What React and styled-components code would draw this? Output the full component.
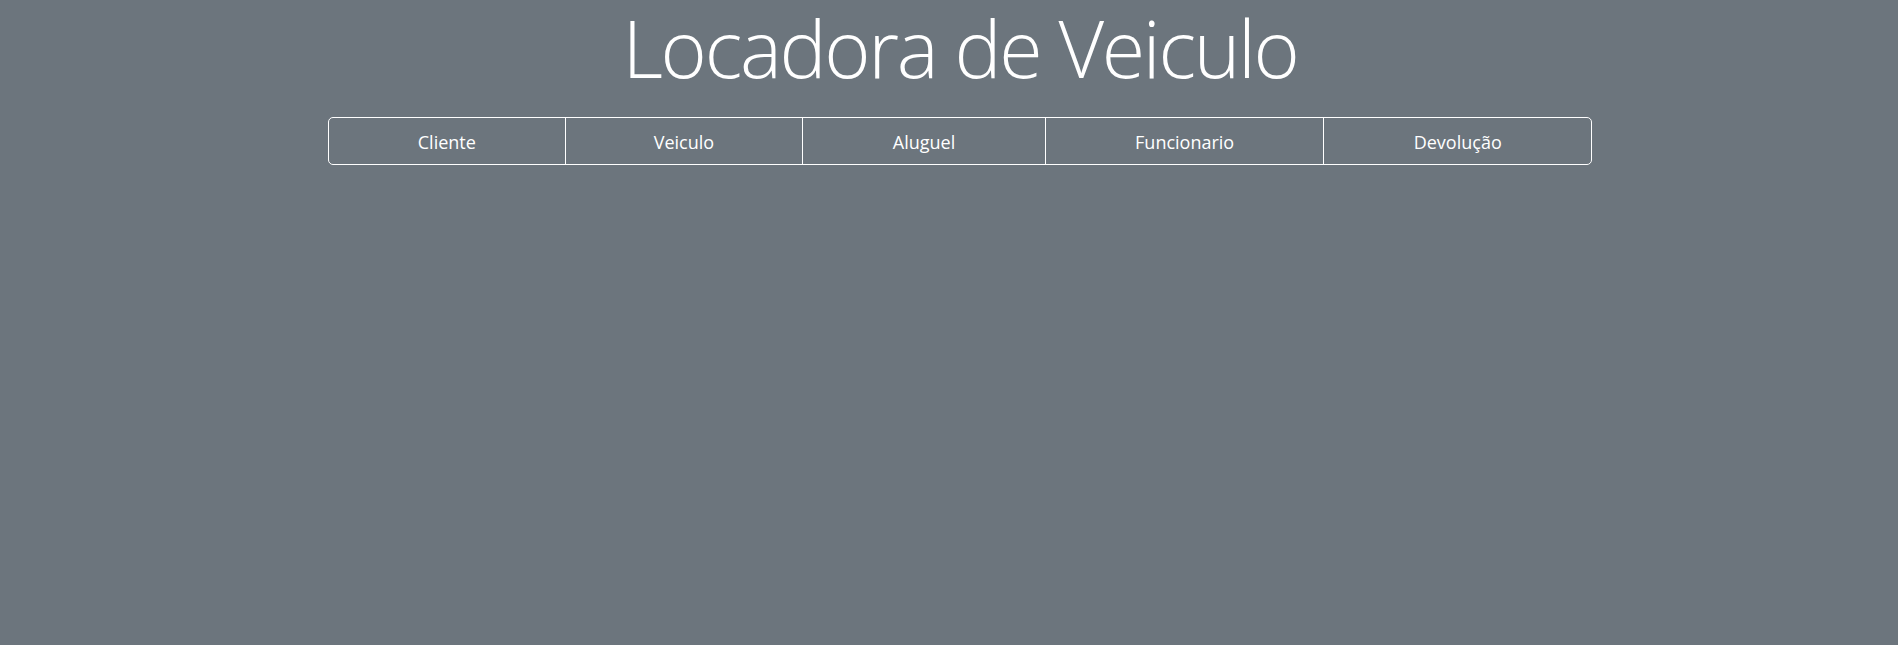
import React from 'react';
import styled, { createGlobalStyle } from 'styled-components';

const GlobalStyle = createGlobalStyle`
  html, body {
    margin: 0;
    padding: 0;
    background: #6c757d;
    min-height: 100%;
  }
  body {
    font-family: "Open Sans", "Noto Sans", "Liberation Sans", sans-serif;
    color: #fff;
  }
`;

const Page = styled.div`
  min-height: 645px;
  padding-left: 22px;
  display: flex;
  flex-direction: column;
  align-items: center;
`;

const Title = styled.h1`
  margin: 0;
  font-size: 79px;
  font-weight: 300;
  line-height: 96px;
  letter-spacing: -2.3px;
  color: #fff;
`;

const Menu = styled.nav`
  margin-top: 21px;
  width: 1264px;
  height: 48px;
  box-sizing: border-box;
  border: 1px solid #fff;
  border-radius: 5px;
  display: grid;
  grid-template-columns: 236fr 238fr 243fr 279fr 268fr;
`;

const MenuItem = styled.a`
  display: flex;
  align-items: center;
  justify-content: center;
  padding-top: 2px;
  font-size: 18px;
  color: #fff;
  text-decoration: none;
  border-left: ${props => props.first ? 'none' : '1px solid #fff'};
  cursor: pointer;
`;

const items = ['Cliente', 'Veiculo', 'Aluguel', 'Funcionario', 'Devolução'];

const App = () => (
  <>
    <GlobalStyle />
    <Page>
      <Title>Locadora de Veiculo</Title>
      <Menu>
        {items.map((item, i) => (
          <MenuItem key={item} first={i === 0}>{item}</MenuItem>
        ))}
      </Menu>
    </Page>
  </>
);

export default App;
